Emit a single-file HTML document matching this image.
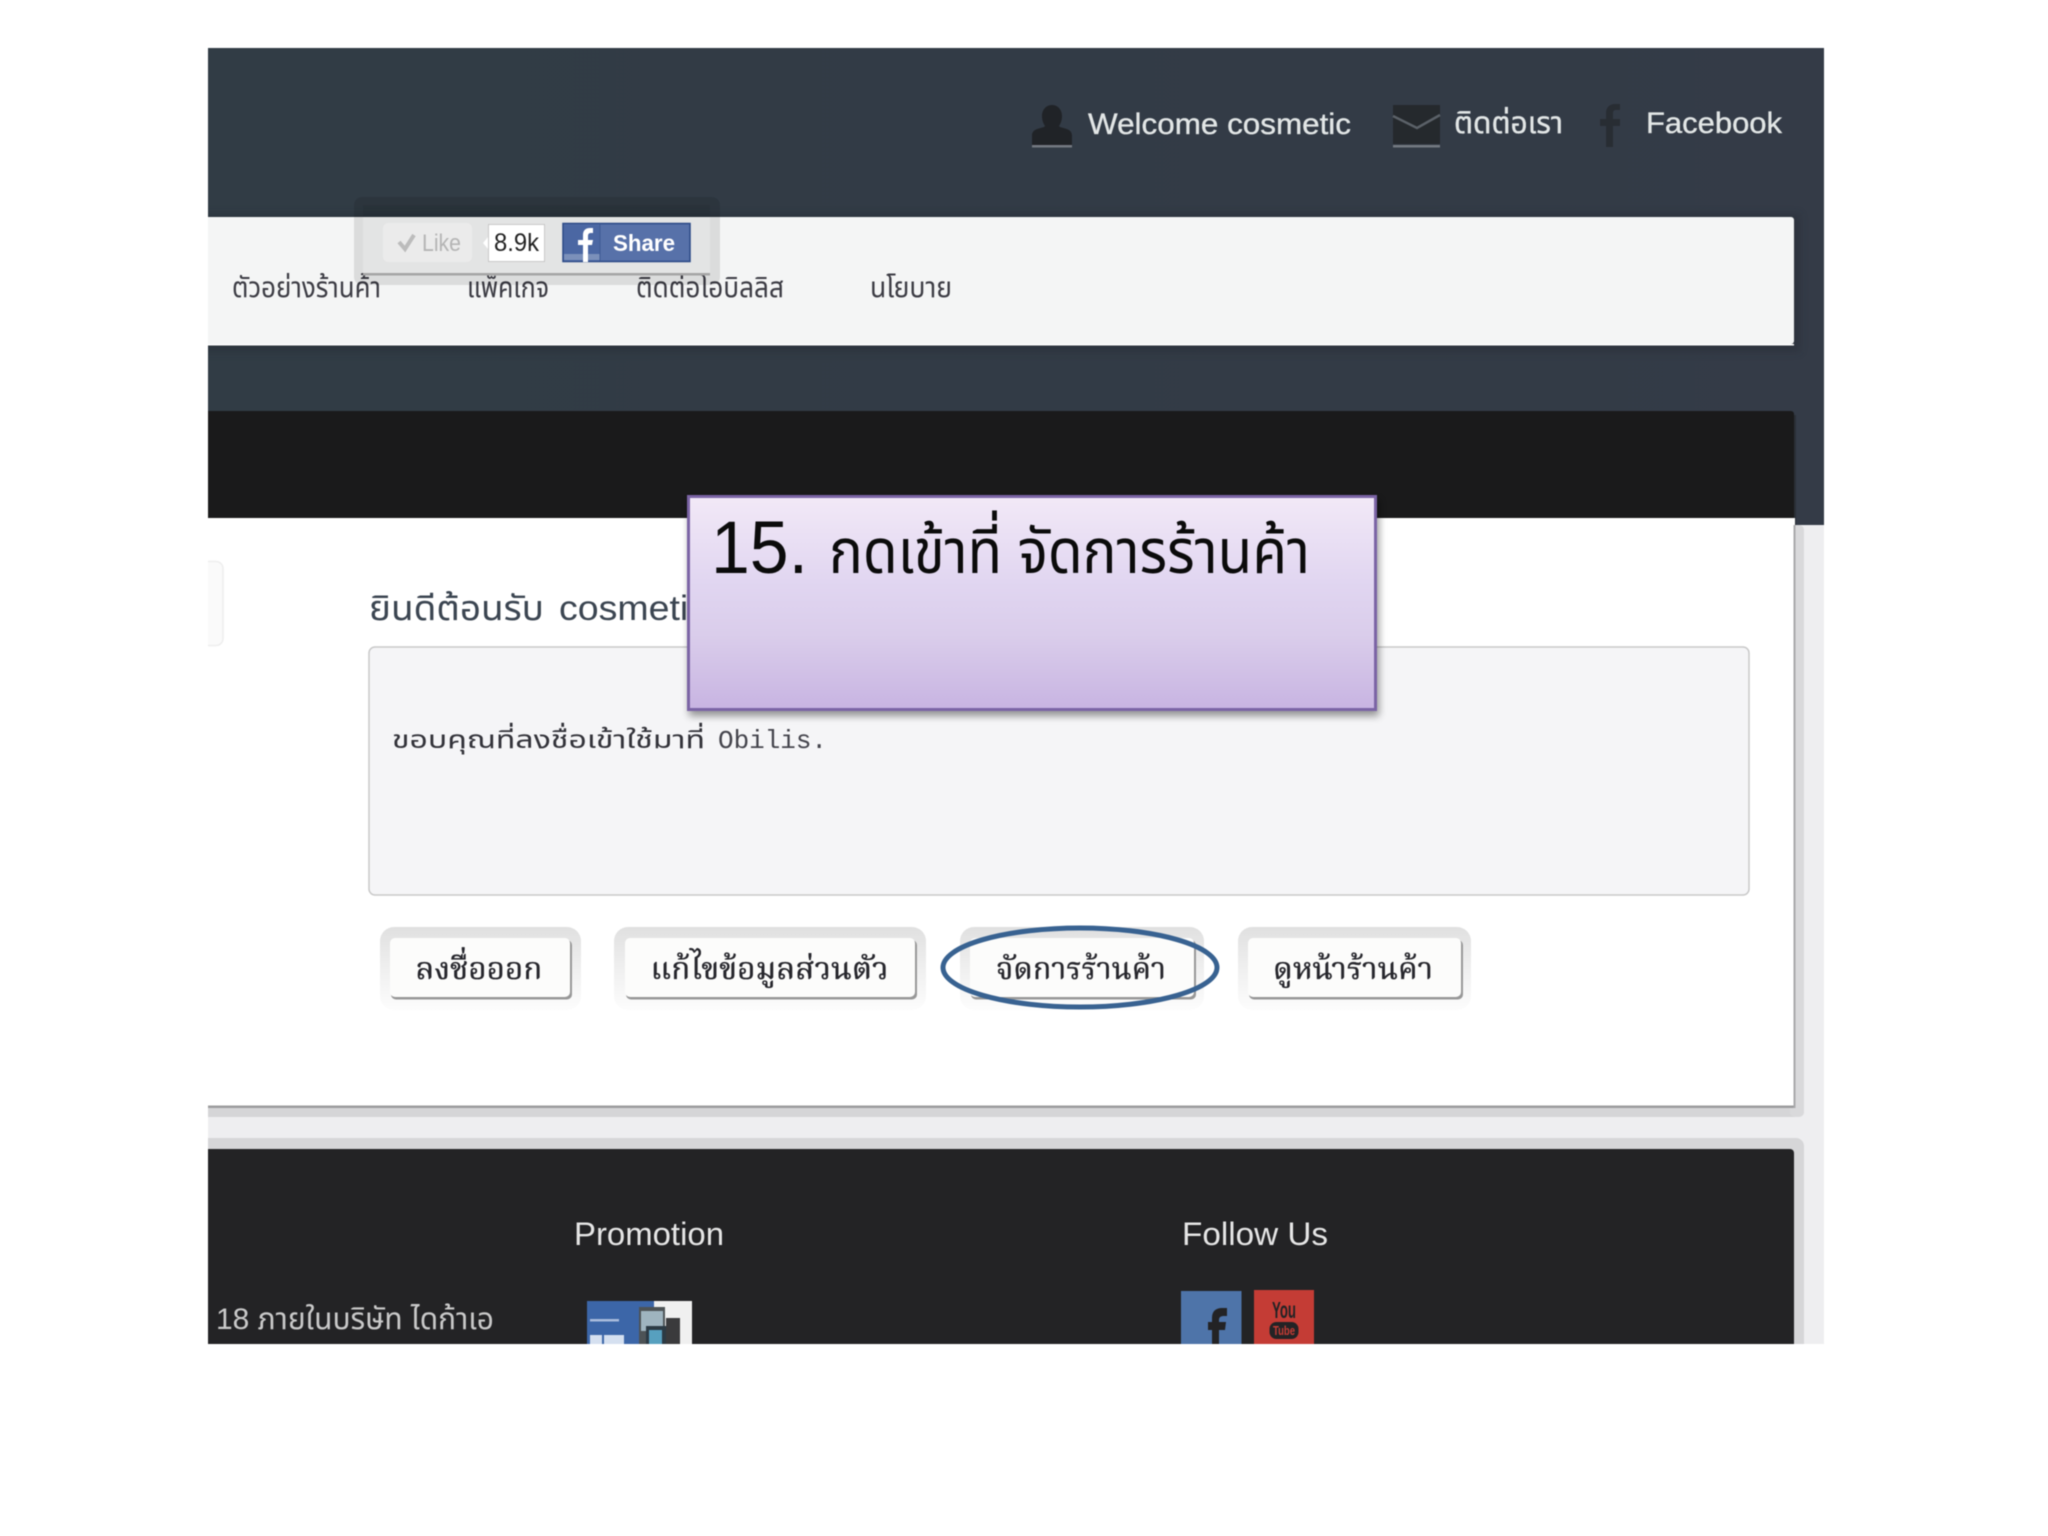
<!DOCTYPE html>
<html><head><meta charset="utf-8"><title>15</title>
<style>
html,body{margin:0;padding:0;background:#fff;width:2048px;height:1536px;overflow:hidden}
svg{display:block;filter:blur(.45px)}
text{font-family:"Liberation Sans","Noto Sans Thai","Noto Sans CJK SC",sans-serif}
.m{font-family:"Liberation Mono","Noto Sans Thai",monospace}
.s{font-family:"Liberation Serif","Noto Serif Thai","Noto Sans Thai",serif;stroke:#26262c;stroke-width:.35px}
.b{stroke:#e2e6e6;stroke-width:.35px}
</style></head><body>
<svg width="2048" height="1536" viewBox="0 0 2048 1536" xmlns="http://www.w3.org/2000/svg">
<defs>
<linearGradient id="top" x1="0" x2="1" y1="0" y2="0"><stop offset="0" stop-color="#313c45"/><stop offset="1" stop-color="#343b47"/></linearGradient>
<linearGradient id="ov" x1="0" x2="0" y1="0" y2="1"><stop offset="0" stop-color="#f2e9f7"/><stop offset=".4" stop-color="#e1d6f1"/><stop offset=".65" stop-color="#dacdeb"/><stop offset="1" stop-color="#c8b4e2"/></linearGradient>
<linearGradient id="bo" x1="0" x2="0" y1="0" y2="1"><stop offset="0" stop-color="#e0e0e0"/><stop offset=".45" stop-color="#eeeeee"/><stop offset="1" stop-color="#fdfdfd"/></linearGradient>
<filter id="sh" x="-5%" y="-10%" width="110%" height="125%"><feGaussianBlur stdDeviation="4"/></filter>
<clipPath id="pg"><rect x="208" y="48" width="1616" height="1296"/></clipPath>
</defs>

<g clip-path="url(#pg)">
<!-- page background -->
<rect x="208" y="48" width="1616" height="477" fill="url(#top)"/>
<rect x="208" y="525" width="1616" height="819" fill="#eeeef0"/>

<!-- nav panel -->
<rect x="190" y="214" width="1610" height="138" fill="#20262d" opacity=".35" filter="url(#sh)"/>
<rect x="190" y="217" width="1604" height="127" rx="3" fill="#f4f5f5"/>
<rect x="190" y="344" width="1604" height="1.500" fill="#fff"/>

<text x="232" y="297" font-size="29" fill="#3c3c44" textLength="149" lengthAdjust="spacingAndGlyphs">ตัวอย่างร้านค้า</text>
<text x="467" y="297" font-size="29" fill="#3c3c44" textLength="82" lengthAdjust="spacingAndGlyphs">แพ็คเกจ</text>
<text x="636" y="297" font-size="29" fill="#3c3c44" textLength="148" lengthAdjust="spacingAndGlyphs">ติดต่อโอบิลลิส</text>
<text x="870" y="297" font-size="29" fill="#3c3c44" textLength="82" lengthAdjust="spacingAndGlyphs">นโยบาย</text>

<!-- like widget -->
<rect x="354" y="197" width="366" height="88" rx="8" fill="#000" opacity=".1"/>
<rect x="363" y="205" width="347" height="12" fill="#000" opacity=".05"/>
<rect x="363" y="217" width="347" height="57" fill="#e3e4e4"/>
<rect x="363" y="273" width="347" height="2.500" fill="#a5a5a5"/>
<rect x="383" y="223" width="89" height="39" rx="5" fill="#ebebeb"/>
<path d="M399 242l6 7 9-14" fill="none" stroke="#bcbcbc" stroke-width="4"/>
<text x="422" y="251" font-size="24" fill="#b5b5b5" textLength="39" lengthAdjust="spacingAndGlyphs">Like</text>
<path d="M488 237l-5 6 5 6z" fill="#fff"/>
<rect x="488.500" y="224.500" width="56" height="37" fill="#fff" stroke="#c8c8c8"/>
<text x="494" y="251" font-size="25" fill="#222" textLength="45" lengthAdjust="spacingAndGlyphs">8.9k</text>
<rect x="563" y="223.500" width="127" height="38" fill="#5771a9" stroke="#2a4886" stroke-width="1.500"/>
<rect x="564" y="225" width="36" height="36" fill="#4b67a3"/>
<rect x="564" y="254" width="36" height="6" fill="#7b90ba"/>
<rect x="599.500" y="224" width="1" height="37" fill="#3e5a94"/>
<path d="M583 262v-17h-5v-5h5v-5c0-5 3-7 7-7h3v5h-2c-2 0-3 1-3 3v4h5l-1 5h-4v17z" fill="#fff"/>
<text x="613" y="251" font-size="23" font-weight="bold" fill="#fff" textLength="62" lengthAdjust="spacingAndGlyphs">Share</text>

<!-- top links -->
<path d="M1052 105c-6 0-10 5-10 11 0 4 1 7 3 10l-1 1c-6 2-12 2-12 9v9h40v-9c0-7-6-7-12-9l-1-1c2-3 3-6 3-10 0-6-4-11-10-11z" fill="#202327"/>
<rect x="1032" y="145" width="40" height="2.500" fill="#737880"/>
<text class="b" x="1088" y="134" font-size="30" fill="#e2e6e6" textLength="263" lengthAdjust="spacingAndGlyphs">Welcome cosmetic</text>

<rect x="1393" y="105" width="47" height="39" fill="#25292d"/>
<path d="M1393 116l24 12 23-13" fill="none" stroke="#5b6168" stroke-width="2.500"/>
<rect x="1393" y="145" width="47" height="2.500" fill="#737880"/>
<text class="b" x="1454" y="133" font-size="30" fill="#e2e6e6" textLength="109" lengthAdjust="spacingAndGlyphs">ติดต่อเรา</text>

<path d="M1606 147v-21h-6v-7h6v-6c0-6 4-9 9-9h5v6h-4c-2 0-3 1-3 3v6h7v7h-7v21z" fill="#282d33"/>
<text class="b" x="1646" y="133" font-size="30" fill="#e2e6e6" textLength="136" lengthAdjust="spacingAndGlyphs">Facebook</text>

<!-- black band -->
<rect x="190" y="411" width="1604" height="120" rx="3" fill="#1a1a1b"/>
<rect x="1794" y="415" width="2" height="110" fill="#2a2f36"/>

<!-- content -->
<rect x="190" y="1000" width="1614" height="117" rx="7" fill="#d5d5d7"/>
<rect x="1790" y="525" width="14" height="592" rx="5" fill="#d9d9db"/>
<rect x="190" y="518" width="1605" height="589" fill="#fff"/>
<rect x="190" y="1105.500" width="1605" height="2.500" fill="#9c9c9e"/>
<rect x="1793.500" y="525" width="2" height="583" fill="#a9a9ab"/>

<rect x="190" y="561.500" width="33" height="84" rx="7" fill="#fafafa" stroke="#eeeeee" stroke-width="1.500"/>

<text x="369" y="620" font-size="35" fill="#3b4551" textLength="175" lengthAdjust="spacingAndGlyphs">ยินดีต้อนรับ</text>
<text x="559" y="620" font-size="35" fill="#3b4551" textLength="148" lengthAdjust="spacingAndGlyphs">cosmetic</text>

<rect x="369" y="647" width="1380" height="248" rx="6" fill="#f5f5f7" stroke="#c9c9c9" stroke-width="1.500"/>
<text class="m" x="392" y="748" font-size="25" fill="#33333a" textLength="313" lengthAdjust="spacingAndGlyphs">ขอบคุณที่ลงชื่อเข้าใช้มาที่</text>
<text class="m" x="718" y="748" font-size="26" fill="#44444c" textLength="109" lengthAdjust="spacingAndGlyphs">Obilis.</text>

<!-- buttons -->
<rect x="380" y="927" width="201" height="83" rx="14" fill="url(#bo)"/>
<rect x="391" y="940" width="181" height="59.500" rx="5" fill="#989898"/>
<rect x="390" y="938" width="180" height="59" rx="5" fill="#fcfcfb"/>
<text class="s" x="415.500" y="979" font-size="30" fill="#26262c" textLength="127" lengthAdjust="spacingAndGlyphs">ลงชื่อออก</text>

<rect x="614" y="927" width="312" height="83" rx="14" fill="url(#bo)"/>
<rect x="626" y="940" width="291" height="59.500" rx="5" fill="#989898"/>
<rect x="625" y="938" width="290" height="59" rx="5" fill="#fcfcfb"/>
<text class="s" x="650.500" y="979" font-size="30" fill="#26262c" textLength="238" lengthAdjust="spacingAndGlyphs">แก้ไขข้อมูลส่วนตัว</text>

<rect x="960" y="927" width="244" height="83" rx="14" fill="url(#bo)"/>
<rect x="971" y="940" width="225" height="59.500" rx="5" fill="#989898"/>
<rect x="970" y="938" width="224" height="59" rx="5" fill="#fcfcfb"/>
<text class="s" x="996" y="979" font-size="30" fill="#26262c" textLength="170" lengthAdjust="spacingAndGlyphs">จัดการร้านค้า</text>

<rect x="1238" y="927" width="233" height="83" rx="14" fill="url(#bo)"/>
<rect x="1249" y="940" width="214" height="59.500" rx="5" fill="#989898"/>
<rect x="1248" y="938" width="213" height="59" rx="5" fill="#fcfcfb"/>
<text class="s" x="1273" y="979" font-size="30" fill="#26262c" textLength="160" lengthAdjust="spacingAndGlyphs">ดูหน้าร้านค้า</text>

<ellipse cx="1080" cy="967.500" rx="137" ry="39.500" fill="none" stroke="#386291" stroke-width="5"/>

<!-- footer -->
<rect x="190" y="1138" width="1614" height="220" rx="8" fill="#d6d6d8"/>
<rect x="190" y="1149" width="1604" height="210" rx="4" fill="#232325"/>
<text x="574" y="1245" font-size="32" fill="#e6e6e6" textLength="150" lengthAdjust="spacingAndGlyphs">Promotion</text>
<text x="1182" y="1245" font-size="32" fill="#e6e6e6" textLength="146" lengthAdjust="spacingAndGlyphs">Follow Us</text>
<text x="216" y="1329" font-size="30" fill="#c9c9c9" textLength="278" lengthAdjust="spacingAndGlyphs">18 ภายในบริษัท ไดก้าเอ</text>

<!-- promo image -->
<rect x="587" y="1301" width="67" height="43" fill="#3c66a8"/>
<rect x="654" y="1301" width="38" height="43" fill="#f0f0f0"/>
<rect x="639" y="1307" width="26" height="37" fill="#4d5356"/>
<rect x="641" y="1311" width="22" height="20" fill="#9fb4bf"/>
<rect x="646" y="1326" width="20" height="18" fill="#2c3a44"/>
<rect x="649" y="1330" width="13" height="14" fill="#57a0bf"/>
<rect x="666" y="1318" width="14" height="26" fill="#3a3a3c"/>
<rect x="590" y="1319" width="29" height="2.500" fill="#a9bcdc"/>
<rect x="590" y="1335" width="12" height="9" fill="#d5e0f0"/>
<rect x="604" y="1335" width="20" height="9" fill="#d5e0f0"/>

<!-- social tiles -->
<rect x="1181" y="1291" width="60.500" height="53" fill="#4e74a9"/>
<path d="M1212 1344v-14h-4v-8h4v-4c0-7 4-10 10-10h5v8h-3c-3 0-5 1-5 4v2h7l-1 8h-6v14z" fill="#232325"/>
<rect x="1254" y="1290" width="60" height="54" fill="#c43c35"/>
<text x="1272" y="1318" font-size="23" font-weight="bold" fill="#232325" textLength="24" lengthAdjust="spacingAndGlyphs">You</text>
<rect x="1269.500" y="1322" width="29" height="17" rx="7" fill="#232325"/>
<text x="1273" y="1335" font-size="13" font-weight="bold" fill="#c43c35" textLength="22" lengthAdjust="spacingAndGlyphs">Tube</text>

<!-- callout -->
<rect x="689" y="500" width="690" height="216" fill="#000" opacity=".4" filter="url(#sh)"/>
<rect x="688.500" y="496.500" width="687" height="213" fill="url(#ov)" stroke="#7b64a5" stroke-width="3"/>
<text x="711" y="573" font-size="74" fill="#0b0b0b" textLength="97" lengthAdjust="spacingAndGlyphs">15.</text>
<text x="829" y="573" font-size="62" fill="#0b0b0b" textLength="481" lengthAdjust="spacingAndGlyphs">กดเข้าที่ จัดการร้านค้า</text>
</g>
</svg>
</body></html>
